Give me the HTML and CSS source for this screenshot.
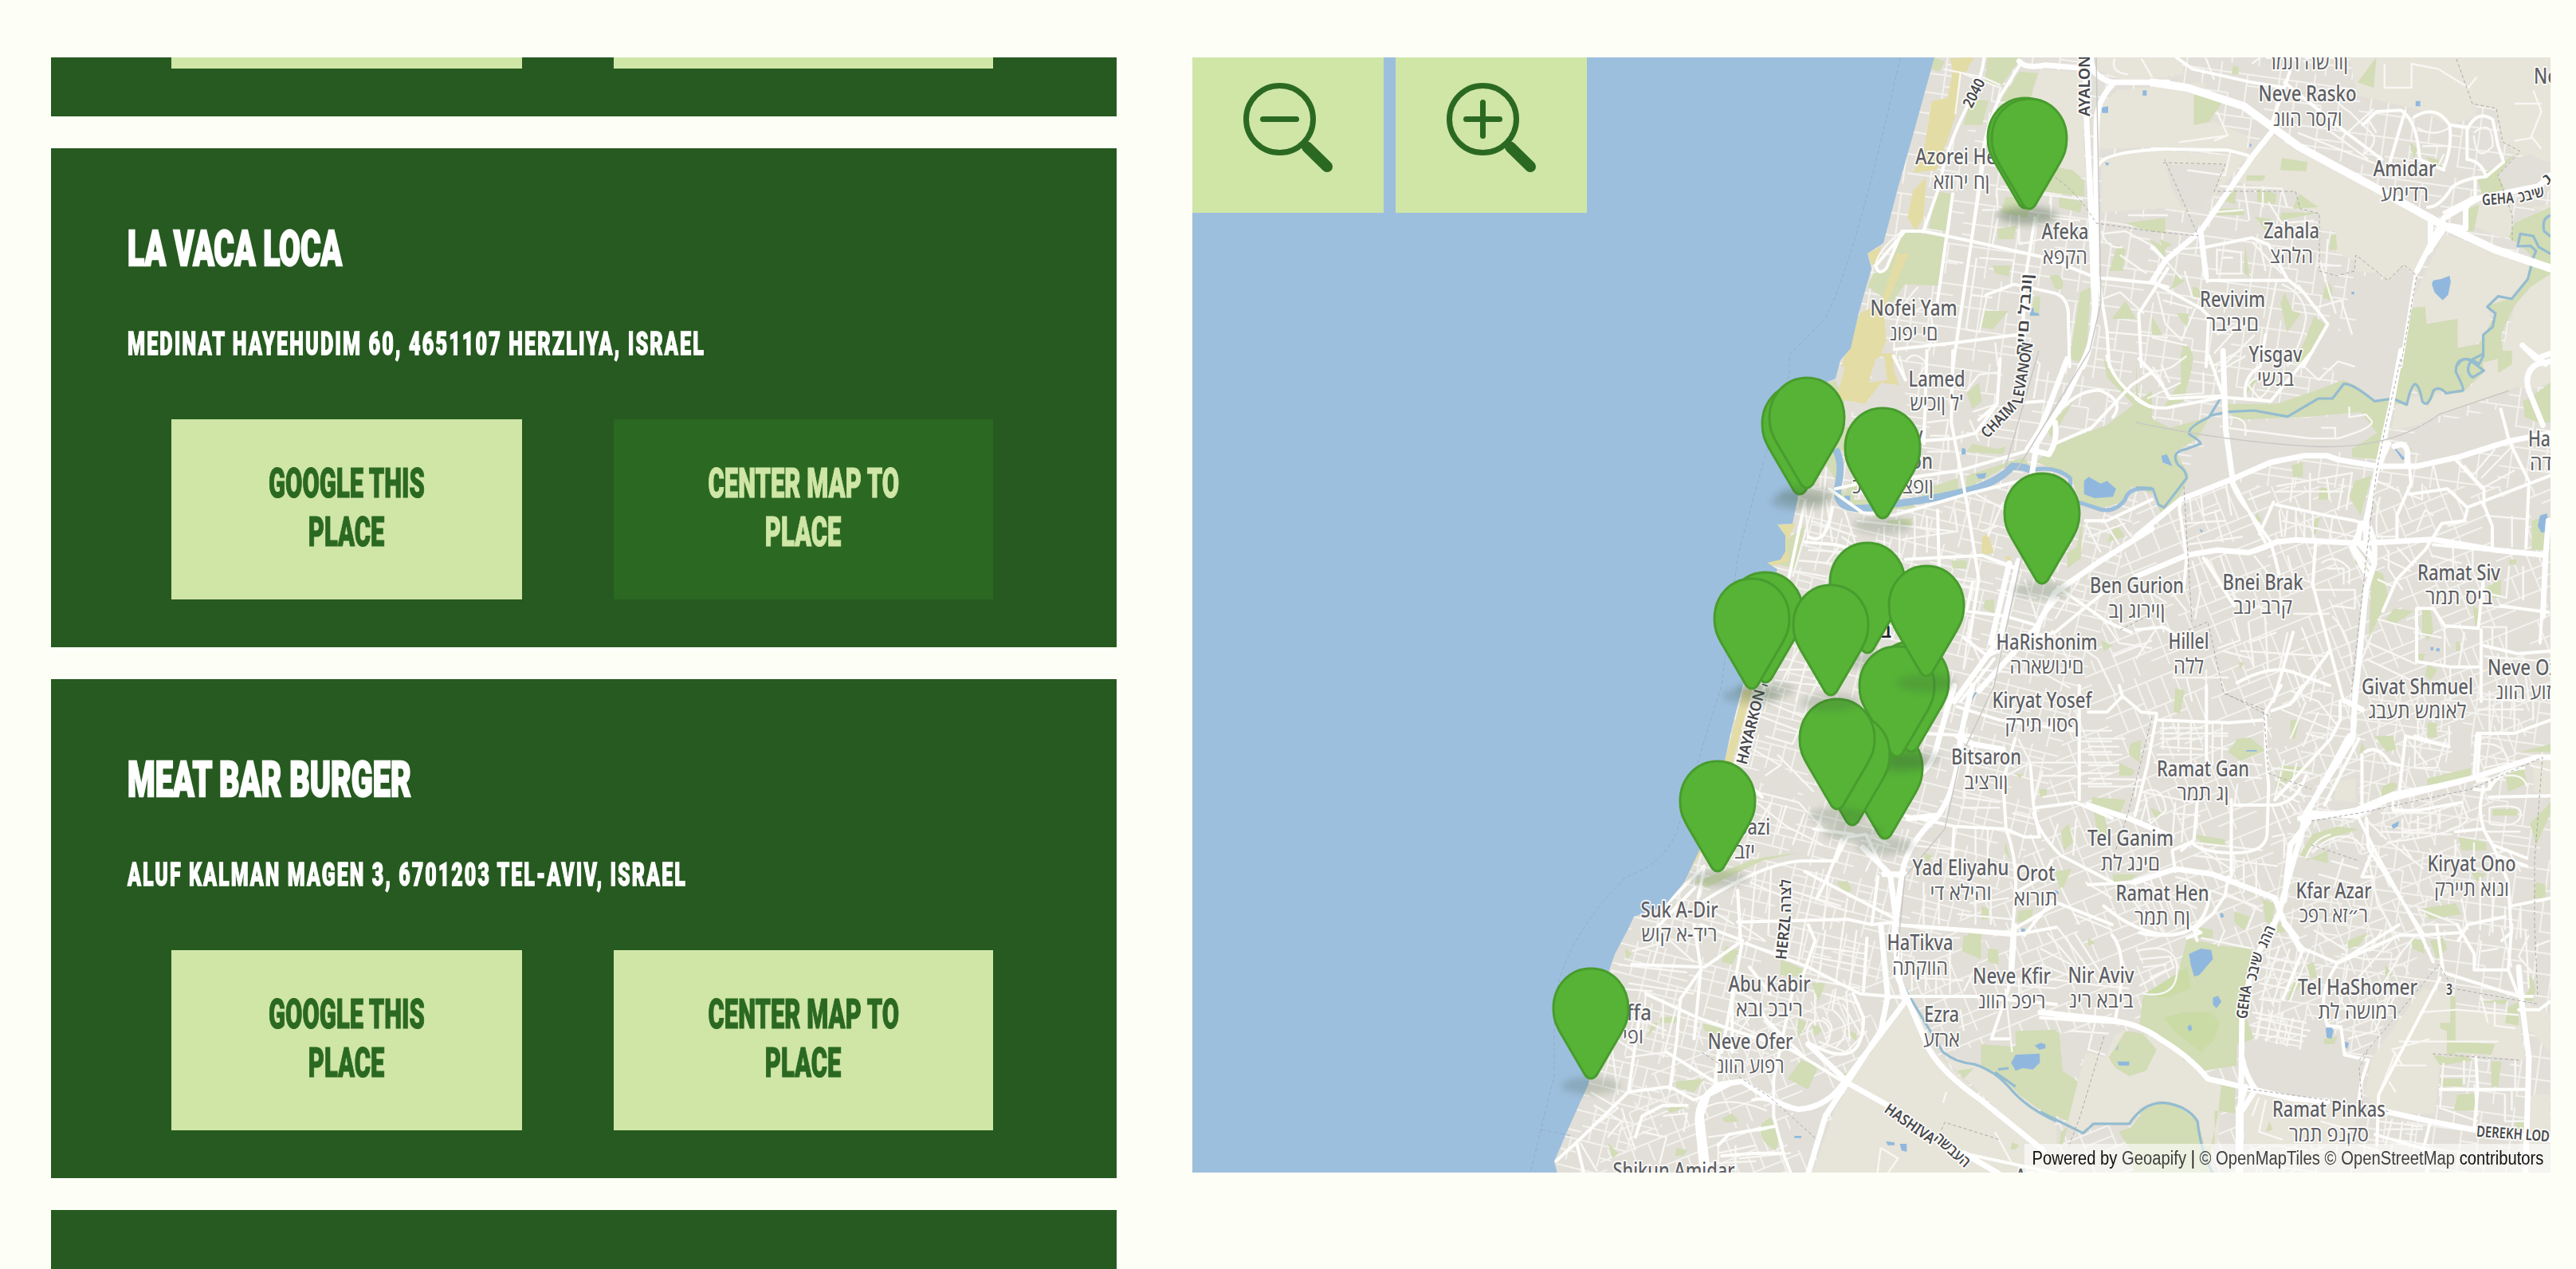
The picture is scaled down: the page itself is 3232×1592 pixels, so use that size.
FILE: index.html
```html
<!DOCTYPE html>
<html lang="en">
<head>
<meta charset="utf-8">
<title>Places</title>
<link rel="stylesheet" href="styles.css">
</head>
<body>
<main class="page">
  <section class="places">
    <article class="card card-first">
      <div class="actions"><button class="btn google" aria-label="Google this place"></button><button class="btn center" aria-label="Center map to place"></button></div>
    </article>
    <article class="card">
      <h2 class="name"><span class="fit fit-vaca">LA VACA LOCA</span></h2>
      <p class="address"><span class="fit fit-medinat">MEDINAT HAYEHUDIM 60, 4651107 HERZLIYA, ISRAEL</span></p>
      <div class="actions">
        <button class="btn google"><span class="line">GOOGLE THIS</span><span class="line">PLACE</span></button>
        <button class="btn center active"><span class="line">CENTER MAP TO</span><span class="line">PLACE</span></button>
      </div>
    </article>
    <article class="card">
      <h2 class="name"><span class="fit fit-meat">MEAT BAR BURGER</span></h2>
      <p class="address"><span class="fit fit-aluf">ALUF KALMAN MAGEN 3, 6701203 TEL-AVIV, ISRAEL</span></p>
      <div class="actions">
        <button class="btn google"><span class="line">GOOGLE THIS</span><span class="line">PLACE</span></button>
        <button class="btn center"><span class="line">CENTER MAP TO</span><span class="line">PLACE</span></button>
      </div>
    </article>
    <article class="card"></article>
  </section>

  <section class="map">
    <svg class="canvas" viewBox="1496 72 1704 1399">
      <defs>
        <pattern id="blocks-a" width="118" height="104" patternUnits="userSpaceOnUse" patternTransform="rotate(8)">
          <path class="minor" d="M0 12H118M0 38H70M0 66H118M40 90H118M14 0V66M36 12V104M58 0V38M70 38V104M92 12V66M104 66V104M14 66V90H36M70 52H92M92 26H118M70 80H104M0 52H14"/>
        </pattern>
        <pattern id="blocks-b" width="132" height="112" patternUnits="userSpaceOnUse" patternTransform="rotate(-22)">
          <path class="minor" d="M0 10H132M0 34H52M52 44H132M0 60H100M0 88H132M20 10V60M38 34V112M52 0V60M76 44V88M100 10V112M116 44V88M64 10V44M84 10V44M10 60V88M60 88V112M80 100H132M38 74H76"/>
        </pattern>
        <pattern id="blocks-c" width="84" height="72" patternUnits="userSpaceOnUse" patternTransform="rotate(14)">
          <path class="minor" d="M0 8H84M0 26H48M0 44H84M30 60H84M12 0V44M30 8V72M48 0V44M62 8V60M74 44V72M48 34H84M12 16H30"/>
        </pattern>
        <g id="pin">
          <ellipse class="shadow" cx="0" cy="8" rx="37" ry="11"/>
          <path class="drop" d="M-7 -5L-38 -58C-44 -69 -47 -76 -47 -89C-47 -117 -27 -139 0 -139C27 -139 47 -117 47 -89C47 -76 44 -69 38 -58L7 -5Q0 3 -7 -5Z"/>
        </g>
        <filter id="soft" x="-30%" y="-80%" width="160%" height="260%"><feGaussianBlur stdDeviation="4"/></filter>
      </defs>

      <rect class="land" x="1496" y="72" width="1704" height="1399"/>
      <!-- street blocks -->
      <rect fill="url(#blocks-a)" x="2230" y="72" width="970" height="540"/>
      <path fill="url(#blocks-c)" d="M2200 610L2690 600L2640 780L2530 1100L2400 1200L2000 1471H1950L2040 1150Z"/>
      <path fill="url(#blocks-b)" d="M2690 610H3200V860L2900 1471H2000L2100 1300L2400 1200L2530 1100L2640 780Z"/>
      <path fill="url(#blocks-a)" d="M2900 860H3200V1471H2800Z"/>

      <!-- open land, parks, beaches and lakes -->
      <g transform="matrix(.33333 0 0 .33333 2200 60)">
        <path class="farm" d="M1080 80L1230 90L1250 490L1130 440L1040 200ZM1300 220L1370 160L1700 130L1700 370L1300 380ZM1310 420L1420 385L1560 380L1560 600L1310 620ZM1290 36H1560V110L1400 125L1290 80Z"/>
        <path class="plain" d="M1060 910L1180 940L1190 1200H1040ZM760 40L860 36L840 300L740 330Z"/>
        <path class="green" d="M880 36H1010L930 145L870 130ZM1000 90L1070 95L1040 200L930 200ZM680 36L720 50L700 90L670 80ZM820 190L885 200L860 290L790 290ZM565 690L720 710L695 895L570 890L520 960L430 900L450 850L490 840ZM690 540L745 550L725 690L660 680ZM1110 445L1200 460L1245 500V560L1090 540ZM950 560L1050 570L1030 640L930 620ZM1150 560L1240 580L1230 620L1150 600ZM900 820L970 820L960 860L910 850ZM1115 860Q1150 840 1165 880Q1170 920 1135 905ZM1230 920L1270 900L1250 1190L1190 1170ZM870 990L960 990L900 1060L850 1050ZM1060 930L1080 940L1075 1010L1040 1010ZM920 680L990 670L980 720H920ZM1370 740L1400 760L1390 840H1340ZM1400 950L1440 1020H1350ZM1400 660L1550 640V700L1460 680ZM1490 720L1550 750V800Z"/>
        <path class="sand" d="M740 40L830 36L800 90L780 110L770 230L690 460L600 470L640 400L670 200L730 190L750 90ZM650 485L640 640L610 690L580 640L600 540ZM430 775L480 745L470 800L445 820ZM540 775L585 775L490 990L500 1100L460 1200H330L400 1000L480 960Z"/>
        <path class="lake" d="M1310 225L1335 220V245H1312ZM1465 160H1480V180H1465ZM1045 980H1055V995L1075 1000V1008H1040ZM1322 430L1340 435L1330 445Z"/>
      </g>
      <g transform="matrix(.3393 0 0 .3333 2700 60)">
        <path class="farm" d="M0 36L100 36L120 100L0 110ZM0 150L160 170L150 290L230 280L350 330V400L0 370ZM0 385L350 410L180 620L0 600ZM440 320L540 390L850 540L1030 640L1030 700L975 850L920 820L880 880L850 850L750 840V800L680 770V690L620 680V620L520 610L545 545L300 505L360 430ZM730 36H1474V430L1350 400L1290 350L1270 230L1200 215V260L1100 290L980 230L760 180ZM1080 700L1280 770L1400 800L1390 860L1330 950L1240 970L1260 1060L1210 1110L1130 1130V1020L1010 1040V975H950ZM1210 570L1330 590L1340 690L1300 720L1170 660ZM1400 860L1474 850V1200H1280L1340 980ZM1400 600L1474 590V620Z"/>
        <path class="plain" d="M50 440L265 440L235 540L180 620L110 600L70 520ZM750 850L880 880L920 830L975 855L910 1200H550L650 1030L680 1060L740 1090L760 1000L720 940ZM1300 430L1400 400L1474 440V530L1400 550L1200 520Z"/>
        <path class="green" d="M155 175L260 205L210 280L155 290ZM480 415L575 430L570 465L475 460ZM830 36L820 150L760 130ZM350 480L420 480L410 500L350 500ZM250 605L340 605V630H240ZM265 575L310 530L310 590ZM390 530L460 550L455 590L390 580ZM545 550L615 600L520 605ZM480 620L620 620L470 650ZM380 635L440 645L420 690ZM950 350L980 380L970 420ZM1010 410L1060 420L1085 470L1050 450ZM1205 500L1230 470L1300 430L1350 395L1310 440L1280 480L1310 540L1220 550ZM1160 610L1210 590L1190 690H1160ZM1320 715L1340 660L1474 600V850L1400 900L1340 970L1290 1080L1300 1170L1240 1200H915L950 980L1010 975L1015 1040L1130 1020V1130L1210 1115L1240 1060L1270 1000L1240 970L1340 940L1390 860L1400 780L1360 740ZM345 740L360 860L340 850ZM490 920L520 990L550 1000L500 1070L475 960ZM90 840L120 880L70 910ZM150 900Q190 900 180 950L150 940ZM645 880Q680 900 660 950L630 940ZM600 1010L640 1040L560 1190H530ZM90 1000H135V1060ZM0 1010L40 1080H0ZM110 1110Q160 1130 150 1190H120ZM660 710L680 700L685 760H655ZM30 720L75 740L40 760ZM300 70H320V100H295Z"/>
        <path class="lake" d="M1040 875L1070 870L1100 858L1105 880L1095 930L1075 950L1045 920L1035 890ZM975 200H992V220H975ZM360 360L370 365L362 375ZM738 918H748V928H738Z"/>
      </g>
      <g transform="matrix(.3827 0 0 .3333 2100 440)">
        <path class="plain" d="M660 30L720 20L750 110L770 240L640 260L530 200L640 190ZM850 240L990 130L1000 260L910 330H830ZM1060 20L1180 40L1190 190L1100 180Z"/>
        <path class="green" d="M480 130L530 110L560 190L540 280L610 300V420L560 540L500 430ZM850 510L930 480L935 530L800 560ZM960 470L1150 400L1170 440L1100 430L960 520ZM1190 420L1250 350L1420 280L1568 150V540L1500 510L1470 570L1380 600L1330 560L1300 470ZM1240 330L1310 190L1220 290ZM360 720L430 660L400 820L330 800ZM1340 630L1335 780L1290 820V760L1320 740ZM1410 30L1480 130L1560 210L1530 230L1420 100ZM960 160L1000 120L1010 190L980 220ZM980 350L1060 370L1090 360L1080 390L960 380ZM910 790L960 790V820H915ZM1020 940L1050 935V990L1015 970ZM1400 1090L1440 1110L1410 1130ZM1450 650L1480 700L1420 720ZM700 640L780 630V660H700ZM640 340L540 380L540 570L600 610L800 590L750 560L590 560Z"/>
        <path class="sand" d="M570 10L720 10V70L740 130L680 120L640 180L630 200L530 180L550 110ZM660 20L640 120L700 110L690 20ZM340 655L400 650L370 720L380 790L330 810L305 800L360 760L360 700ZM1010 700L1030 690L1050 760L1010 770ZM1085 775L1105 775L1100 800Z"/>
        <path class="lake" d="M1345 540V490L1360 475L1400 500L1420 490L1450 520L1440 550L1380 555ZM990 465L1025 460L1020 480L1000 482ZM560 545H578V565H560ZM945 365L957 370V390H943Z"/>
      </g>
      <g transform="matrix(.352 0 0 .3333 2680 440)">
        <path class="farm" d="M930 180L1180 150L1240 80L1290 90L1400 20V120L1150 220L1000 280L910 300ZM1180 60L1400 0H1477V120L1400 150Z"/>
        <path class="plain" d="M640 0H950L915 180L850 190L780 130L720 120L700 70ZM350 270L800 240L860 280L780 380H720L560 400L350 470L320 300ZM1000 290L1290 220L1330 330L1050 420L970 360ZM200 370L330 340L340 480L150 560L190 470ZM1230 590L1400 500L1390 740L1270 740Z"/>
        <path class="green" d="M0 40L10 230L120 290L260 250L220 330L140 380L190 470L150 560L90 620L60 520L0 510ZM320 200H500L640 150L740 110L780 130L850 190L910 180L870 410L770 400L770 370L860 310L800 230L600 250L350 260ZM950 0H1230L1240 80L1160 160L1070 150L1040 210L990 140L960 200H920ZM1290 0H1340V50L1290 85ZM1380 190L1440 150L1477 120V270H1430L1385 250ZM555 430L595 420V475H560ZM655 515H685V560H650ZM780 490L840 470L800 620L760 550ZM380 180L440 100L400 120ZM640 630H655L640 690H625ZM430 610L450 640L420 650ZM840 820L880 840L900 930L830 1080ZM920 970L990 980L920 1030L890 1010ZM1410 640L1470 620V750H1410ZM1020 975H1050L1060 1060L1040 1090L1020 1060ZM1250 890L1300 860V930H1270ZM1330 785H1355V805H1330ZM1200 960L1230 980L1210 1040ZM780 740L830 830L780 800ZM1040 1180L1075 1200L1050 1240L1030 1220ZM365 1170L385 1175L370 1200ZM1140 1095H1155V1130H1140ZM1000 1140H1030L1020 1180ZM40 200L100 210L160 110V0L200 60L170 190L110 210ZM930 340L990 380L960 350Z"/>
        <path class="lake" d="M1440 620L1465 612L1470 680L1445 685L1432 660ZM918 365L928 370L958 405L950 412ZM90 395L110 390L130 435L95 420ZM1050 1115H1060V1128H1050ZM1070 1120H1082V1132H1070ZM225 670L240 678L232 685Z"/>
      </g>
      <g transform="matrix(.3827 0 0 .3333 2050 860)">
        <path class="plain" d="M390 330L470 290L560 370L520 430L430 380ZM1060 900H1180V960H1060Z"/>
        <path class="green" d="M380 660Q440 640 540 630L420 660L240 760L200 740ZM665 740L700 735L715 770L690 785ZM1380 700L1435 690L1400 780ZM1510 430L1568 425V480L1540 460ZM1400 550L1425 520L1440 590L1410 620ZM1140 830L1165 840L1160 880H1140ZM1260 850L1310 840L1300 890H1255ZM1330 390H1355L1350 425L1330 415ZM1250 330L1275 335L1265 350ZM950 630L980 640L960 670ZM1220 590L1235 660L1215 620ZM1100 920H1140V950H1090Z"/>
        <path class="sand" d="M360 20L390 10L320 300L225 620L160 740L180 680L215 600L300 270Z"/>
        <path class="lake" d="M1380 770L1392 775V785H1380ZM1270 915H1282V930H1270Z"/>
      </g>
      <g transform="matrix(.3903 0 0 .3333 2620 860)">
        <path class="plain" d="M590 150L680 100L740 130L700 210L590 240ZM780 400L870 370V460L790 470ZM1170 150H1230V320L1170 310ZM690 660L770 610L890 640L890 720L800 800L690 740Z"/>
        <path class="farm" d="M1430 290L1486 280V420L1430 400ZM800 360L860 350V440L790 430Z"/>
        <path class="green" d="M280 10L310 20L295 105L275 100ZM480 200L520 195L570 245L490 285L450 250ZM135 220L170 205L165 290L130 260ZM100 290L150 320L140 340H100ZM10 420L120 430L100 490L50 480L70 570L30 560ZM620 300L710 310L600 390ZM780 290L790 300L760 360ZM1090 350L1230 310V340L1090 390ZM880 210L890 240L870 260ZM920 190L980 190L990 240L960 250ZM1090 140H1120V195H1090ZM945 380Q990 350 995 380L940 440ZM680 640L720 560L800 530L870 540L720 600L700 660L770 620V670ZM1070 840L1180 820L1200 860L1100 880ZM1300 465L1380 465V490H1300ZM470 850L520 870L500 920L470 890ZM1340 330L1400 310L1410 370L1350 400ZM1420 520L1486 440V480L1440 600ZM340 560L440 580V600H370ZM1190 570L1280 590V620H1200ZM1230 700L1280 710L1250 740ZM1390 250L1486 220V250ZM1440 740L1470 750V800H1430ZM200 460L240 480L220 510ZM650 130H680L665 200H650ZM440 750L560 800L570 890L590 900L600 820ZM610 890L635 900L630 930H605ZM80 710H160L140 730L80 740ZM360 910L400 920V950H350Z"/>
        <path class="lake" d="M975 525L1000 510L995 530L980 540ZM425 855L435 860V873H425ZM508 243H542V248H508Z"/>
      </g>
      <g transform="matrix(.4337 0 0 .3333 1900 1160)">
        <path class="farm" d="M1130 300L1230 500L1390 700L1530 840L1568 936H860L930 690L980 580L1080 370ZM1240 500L1400 560L1568 760V860L1500 820Z"/>
        <path class="plain" d="M810 690L930 640L860 870L790 830ZM1010 290L1100 290L1050 380ZM1240 480L1340 460L1360 540Z"/>
        <path class="green" d="M770 130L840 170L820 195L770 190ZM610 80L650 100L630 150L600 140ZM1350 450L1450 460V400L1568 395V740L1460 640L1400 560L1350 530ZM830 510L880 530L850 620L790 580ZM545 370L600 390V420L550 400ZM860 220H900L880 290ZM820 350L845 370L820 430ZM740 725Q780 780 755 850Q700 810 715 750ZM1300 40L1350 50V130L1295 100ZM1370 90L1400 95V150L1370 140ZM465 590L550 580L520 630L470 615ZM270 820L300 860L285 880ZM470 840L500 850L490 870H465ZM1280 550L1330 540L1300 580ZM320 90L340 110L325 130ZM860 380Q880 370 890 400L870 420ZM440 690L510 680L450 710ZM600 730L630 710L650 740L610 745ZM420 350L470 345V370H420ZM950 390L990 410V440ZM400 370H420L380 430ZM930 570L980 550L960 580ZM1440 820L1460 830L1450 845H1435Z"/>
        <path class="lake" d="M1437 520L1450 490L1520 485V520L1500 545L1470 540L1450 550ZM1505 455L1530 440L1538 455L1520 472ZM1075 815L1100 820V830H1080ZM1115 825H1135V855L1120 850ZM810 795H830V803H810Z"/>
      </g>
      <g transform="matrix(.4286 0 0 .3333 2560 1160)">
        <path class="farm" d="M130 490L240 400L300 410L390 460L490 580L530 610L520 830H480L460 740L400 680L350 660L290 690L260 750L150 745L120 780L80 740ZM600 620L680 650L840 665L930 680L920 760L870 830H600L590 700ZM1120 240L1200 260V480L1150 500L1170 520L1155 710H1000L950 640L970 500ZM1210 320L1400 340L1420 510L1210 480ZM1400 290L1492 330V480L1420 380ZM1440 640H1492V936H1380Z"/>
        <path class="plain" d="M640 430L770 470L850 370L890 490L960 510L940 650L780 650L640 620L600 550V440ZM0 400L60 410L230 380L190 500L130 480L100 580L60 550V420ZM740 370L840 350L830 480L760 470ZM250 300L290 280L270 390L220 370Z"/>
        <path class="green" d="M430 50L530 80L620 90L600 340L625 430L575 450V530L480 550L420 510L360 430L290 380L300 270L400 200ZM0 400L55 405L65 550L110 590L80 740L0 690ZM250 400L300 410L340 470L310 550L260 570L220 540L200 500ZM530 600L570 610V710L510 700V830H480L460 740L400 680L350 665L300 700L270 760L230 780L270 860V936H500V830L520 715ZM1200 270H1215V490H1190V400L1170 390V370H1200ZM1215 440L1330 450L1320 490L1215 480ZM1150 490L1210 500L1230 490L1270 510L1170 530ZM1370 310L1400 290V380L1360 370ZM1280 290L1370 280L1360 300ZM1140 60L1180 50L1190 90L1160 130ZM1085 50L1120 60L1125 110L1090 90ZM1320 515H1350L1340 610H1320ZM1220 640L1270 635L1275 700H1210ZM1170 580H1235V610H1170ZM780 150L800 140L810 200H790ZM740 220H770L720 290ZM900 60L960 30L930 80L900 90ZM1010 150L1030 190L1010 200ZM1430 190Q1460 220 1440 290L1400 280L1430 250ZM830 430L870 420L860 450H830ZM140 50L160 70L140 80ZM1390 740H1415V770H1390ZM670 740L680 770L660 780ZM60 780L80 760L65 830H55Z"/>
        <path class="bright" d="M420 330L500 330L525 370L510 430L470 480L400 410L360 350ZM300 265L430 160L440 240L370 275Z"/>
        <path class="lake" d="M435 110L470 90L500 95L505 130L465 190L450 195L440 150ZM505 275L520 268L530 290L515 315L505 300ZM430 385L440 375L445 395L435 402ZM835 390L850 380L858 400L852 430L838 425ZM892 440L903 445L898 468L892 460ZM225 515H260V530H230ZM0 445L15 450V465L0 470ZM228 450L222 470L225 475Z"/>
      </g>

      <!-- Yarkon and Ayalon -->
      <g transform="matrix(.3827 0 0 .3333 2100 440)">
        <path class="river wide" d="M530 370Q555 420 540 500T580 590Q620 600 700 580Q850 560 950 530Q1060 500 1110 435Q1150 435 1170 450"/>
        <path class="river mid" d="M1170 450Q1250 430 1300 480V560L1380 590Q1440 620 1480 560Q1490 510 1568 520"/>
      </g>
      <g transform="matrix(.352 0 0 .3333 2680 440)">
        <path class="river" d="M0 515L60 520L80 580L100 590L180 480Q180 450 150 430Q120 380 180 370L230 350Q230 340 190 315Q180 290 260 250L300 180M260 245L330 230L420 225L540 248L650 180H700L740 125Q770 120 850 190L915 180L965 203Q980 130 995 125Q1010 130 1020 190Q1040 220 1060 150Q1080 130 1105 160L1165 150Q1170 140 1140 80Q1140 20 1190 35L1240 75L1200 100Q1170 80 1195 35L1240 10"/>
      </g>
      <g transform="matrix(.3393 0 0 .3333 2700 60)">
        <path class="river" d="M1130 1195Q1150 1150 1210 1190L1225 1160L1225 1080L1260 1050L1270 1000L1240 975L1280 935L1330 945L1390 870L1410 790L1420 765L1400 745L1352 747L1362 700L1410 708L1430 750L1474 775M1474 630Q1440 640 1450 690L1474 710"/>
      </g>
      <g transform="matrix(.4337 0 0 .3333 1900 1160)">
        <path class="river" d="M1115 210L1240 480Q1280 520 1330 525Q1390 550 1430 610Q1480 690 1568 740M1390 555L1450 610M1400 545L1430 540"/>
      </g>
      <g transform="matrix(.4286 0 0 .3333 2560 1160)">
        <path class="river" d="M0 705L125 785L155 750H260Q300 670 360 670Q430 680 460 740Q470 860 505 936"/>
      </g>
      <g transform="matrix(.3827 0 0 .3333 2050 860)">
        <path class="river thin" d="M1140 0Q1060 110 1070 200Q1070 380 990 510Q900 600 880 700L860 880"/>
      </g>

      <!-- streets and highways -->
      <g transform="matrix(.33333 0 0 .33333 2200 60)">
        <path class="street" d="M780 90L760 250M770 90L930 150L890 310M750 550L730 720M860 400L820 720M860 610H920L915 530L1240 570M920 640L900 740M1000 630V740M1120 560V640L1230 650M1000 740L1240 680M820 930L900 940M840 790L800 1060L850 1070L880 930M850 790L980 800L970 890M730 800L790 810M590 1020Q640 930 740 1010M460 810Q480 750 560 690M530 1140Q520 1000 620 900M660 1140Q700 1000 620 940M910 1110L920 1200M1330 1070L1560 1090M1300 950L1380 920L1470 1000M1310 700L1400 690L1510 750L1560 810M1360 40Q1340 90 1410 100M1460 40L1500 110M1410 630H1560M1310 690Q1330 760 1390 750M1380 780L1480 850M715 80L860 110L930 140"/>
        <path class="road" d="M868 36Q860 120 800 230Q720 390 700 520L640 690M570 690L460 820Q470 860 500 830L560 690L640 690L830 730L1100 790L1290 865L1500 885L1560 900M750 550L690 970M870 400L820 730L750 1200M530 1135L760 1110L990 1080M875 930L980 890L1120 920Q1190 930 1185 1020L1190 1200M1300 440Q1320 390 1560 380M1560 830L1450 1000L1460 1200M1060 640L1020 890L1010 1200M1290 430L1300 220M1300 880L1330 1060L1340 1200"/>
        <path class="highway" d="M1000 50Q1020 80 1100 65L1220 75Q1260 90 1250 200L1270 600L1280 900Q1300 1080 1230 1200M1560 130L1350 130Q1270 110 1270 36M1350 140Q1290 200 1290 300L1290 880Q1290 1080 1240 1200"/>
        <path class="road" d="M1005 60L930 180Q870 310 860 420"/>
      </g>
      <g transform="matrix(.3393 0 0 .3333 2700 60)">
        <path class="street" d="M650 150Q690 220 730 240Q790 300 820 330Q830 370 780 400M800 270L830 320M640 300L800 420M540 320L860 450M700 340L820 230M860 60V150H960V60L1060 80L1170 150L1200 110M980 300Q1040 340 1100 300M1000 370H1100M1080 400L1060 440M1190 320Q1260 260 1260 370Q1200 440 1190 330M1410 160L1440 240L1400 340L1340 350M1340 210H1440M1400 330L1440 380M290 390L270 480L130 460M240 240L280 330L230 350M100 355L280 330M250 520L480 530L500 600M340 510L360 650M410 520V600M430 580L480 660L600 650M210 620L340 610M240 760V850H330V770ZM260 790H300M370 730L480 850M400 740L420 840M460 880L420 1090L400 1200M540 890L600 980L700 950L740 1080M50 800L110 870M80 760L200 750M120 840L150 940L200 950M20 920L50 1040L110 1100L160 980M40 950L150 980M0 1090L130 1120M230 1150L310 1060M240 1080L330 1040M260 1200L380 1080M620 800L680 1000M610 820L700 820M650 720L640 880M480 890Q560 920 570 1010Q560 1100 500 1200M370 60L400 36M200 40L230 120"/>
        <path class="road" d="M90 36L150 80L370 130L490 150M510 90L440 290M490 130L720 320L850 420M0 380L280 385L355 405M200 750L370 715L430 740L500 870M215 875H505L560 920L650 1040L560 1200M0 880L180 980L210 1010L200 1200M180 700L205 880M830 240L920 235Q980 270 990 420L1080 460M935 240L880 430M780 290L830 240M970 260Q1050 210 1100 290Q1110 350 1090 420L1080 450M1100 290L1165 300M1165 420V310Q1200 230 1260 270L1280 370L1300 430L1235 485L1190 490Q1110 510 1100 540Q1060 600 1020 600M1170 420Q1220 430 1235 485M1195 490V560L1080 620M0 750L50 800M400 1200L420 1080"/>
        <path class="highway major" d="M0 130L130 150L340 220L540 370L850 540L1080 670L1270 760L1474 830"/>
        <path class="highway" d="M440 320L370 410L180 690L50 800L0 880M1474 480L1430 520L1210 565L1080 640Q1020 760 980 840M180 690L200 860M1080 680L1020 770M1160 600L1160 680L1100 670M1030 640V760"/>
        <path class="road" d="M975 850L920 1200"/>
        <path class="highway" d="M1474 1150L1420 1170L1370 1120"/>
      </g>
      <g transform="matrix(.3827 0 0 .3333 2100 440)">
        <path class="street" d="M740 20L760 110M760 40Q790 -10 830 50L800 100M830 270L900 260L890 330M960 150L1000 90L1070 80L1060 200L980 230M1190 40L1200 50L1180 180M1000 340L970 260M840 320H900L900 380H830M560 600L600 740L550 700M500 440L480 700M430 560L440 700M460 570L390 850M500 560L520 720M450 640L600 700M540 740L500 800M440 750L580 760M410 790L520 800M400 830L500 850M690 660L690 760M740 640V780M790 620V780M830 620V760M920 600L930 680L750 710M600 640L920 680M1010 680L1060 660M990 540L1120 620M1080 570L1030 700M1150 700L1250 870M1350 650L1400 760M1410 640L1460 730M1450 620L1500 700M1360 700L1480 650M1150 860L1190 1010M1200 920L1330 960M1330 860L1250 1010M1400 1000L1460 1100L1568 1120M1240 1050L1300 1180M1440 1150L1568 1090M880 850L990 870M870 870L1000 900M960 1060L1010 1180M1060 900L1190 930M1190 1200L1300 1270M970 1010L950 1200M1290 1080L1390 1160L1450 1300M1000 1200L1190 1220M340 1200H500M330 1240L480 1260M420 1100L340 1280M450 1110L400 1320M480 1220L440 1320"/>
        <path class="road" d="M830 0L820 350M915 0L910 270L960 570L1000 860L970 1080M990 310L1060 200M1210 190L1150 195M720 20L760 110M530 520L610 500M700 490L940 450L1180 370M810 340L920 330L990 310M510 520L620 610L720 620L960 540L1170 480M430 720L530 730L600 750M760 785L1010 770L1120 820M865 600L870 820M430 570L380 840L330 1090M980 870L960 980L1090 1000L1180 1030M960 970L880 1140M950 1080L1030 1150L1080 1120M1190 1070L1210 1000L1260 930M1080 1110L1250 1060L1420 900M1260 890L1420 1020L1500 1060M1350 640H1420L1568 560M1420 20Q1440 130 1560 210M1210 300Q1310 140 1400 150Q1480 190 1440 250M1000 260L1060 200L1070 30M1250 350L1370 290L1500 130L1568 80M1050 1160L940 1320M1010 770L1130 820M520 590Q500 740 440 700"/>
        <path class="highway" d="M1360 0L1290 170L1190 350L1175 460M1290 30L1200 300L1160 370L1230 390Q1260 340 1250 270M1130 790L1070 1080L920 1320M1568 670L1400 790L1250 910L1190 1040L1000 1280M1100 800L1040 1100"/>
      </g>
      <g transform="matrix(.352 0 0 .3333 2680 440)">
        <path class="street" d="M20 40Q50 100 130 60L180 20M40 180L160 120M80 90L110 170L240 160V80M90 50L120 120M60 60L100 130M400 130Q420 90 460 110T440 180ZM270 60L370 0M290 80L390 20M600 60L650 110L720 40L780 60M660 290H710V330M330 250Q390 250 390 290V320M320 290L620 330H720Q850 290 840 265L820 240L760 250V210M860 490L940 530M620 460V600M560 480L550 570M680 480L690 560M500 510L610 490L770 460L750 600M500 530H740M740 480L720 600M190 540L200 640M230 540L240 620L300 600M320 500L340 620M170 650L320 640M280 600L310 720M180 730L380 700M400 560L480 530M510 600L520 700M540 600L530 700M570 600V710M600 610V710M630 610V710M520 640L780 700M700 630L690 710M1020 500V560L970 540M870 550Q850 620 860 700H930M1060 430L1080 520M1130 400L1230 520L1350 450M1170 430L1200 470L1280 370M1230 480L1340 360M1060 620L1030 600L1000 680M1240 620L1400 635M1340 620V740M1110 660L1180 640M880 780L980 830M900 750L900 820L950 900M860 860L920 890M930 740L990 810M1050 770L1160 800M1130 740V820M1200 750V830M1330 810L1320 930L1200 900M1240 840V960L1470 980M1380 810V940M1230 1040H1320V1130M1270 1040V1120M1170 1060L1150 1190M1100 1040V1190M990 1060L1090 1080M860 1010L1000 1050M830 1100L1000 1180M820 1160L980 1240M840 1070L790 1200M640 900H780V970L700 960M660 800Q710 760 760 820V880M680 820H740V880M540 770L560 850L620 870M500 780L520 990M420 770L480 850M300 770L350 930L480 980M250 780L330 920M200 790L230 900L210 1010M120 900L180 980M10 880L110 950M70 1050L0 1160M40 880L100 1060M350 1010L370 1090L290 1120M400 1020L420 1190M460 1000L470 1200M540 1060L510 1200M370 1130L680 1150M400 1100L500 1060M590 1040L650 1200M700 1000Q760 1060 770 1180M560 990L690 990M560 1200L600 1320M640 1220L620 1320M250 1200L250 1320M130 1230H330M180 1230L200 1320M310 1130L420 1160M1240 1150L1470 1170M1320 1130V1320M1290 1140V1230M1120 1190V1320M1380 1150L1400 1320"/>
        <path class="road" d="M10 30Q90 110 120 180L300 170M260 20L310 170M630 0L480 190L390 180Q380 100 440 60M0 180Q40 220 110 215L310 175L480 190M500 580L680 620L780 640L810 650M460 720L350 500M440 690L490 570M340 500Q370 570 400 600L480 720L510 840M640 720L630 880L690 1120L740 1320M160 560Q150 600 160 630L180 780L170 900M970 380L980 500L930 620V710M975 540L1110 520L1180 590L1477 470M1180 600L1170 640L1090 650L1030 750L930 860L880 980M1400 500L1390 740M1240 580L1270 660V740M1300 220L1330 340L1400 490M1130 400L1240 520V580M1060 730L1250 750M1000 970L1060 970L1100 1035L1220 1045L1240 830M1000 970V1170L1120 1190H1220M1230 1050V1320M1300 960L1470 985M1240 1110L1360 1140L1477 1130M1460 780L1440 1100M690 1130L560 1320M360 1250Q480 1180 560 1210L690 1260M560 1060L490 1320M0 1050L100 1040L170 1090M240 780L350 960M780 740L840 830"/>
        <path class="highway" d="M310 0L320 300L345 490M0 700L160 560L350 480L480 420L600 395H680L720 410L860 435H1000L1150 400L1330 340L1477 310M0 850L180 770L290 750L400 760Q460 740 500 720L570 712L800 725L1060 710L1280 750L1460 770L1470 640M1460 770L1450 1000M920 360Q980 330 965 430M865 430L900 350M945 0L910 200L860 440L820 640V740L850 800L820 900L780 1320M800 650L790 720L850 790V720L830 660M1477 40L1430 50Q1380 80 1400 150L1450 280M1400 0L1460 50M810 650L770 740L820 840"/>
      </g>
      <g transform="matrix(.3827 0 0 .3333 2050 860)">
        <path class="street" d="M430 60L560 120L520 220L430 190M400 110L540 170M390 240L480 300L430 340M470 260L590 400M400 400L540 440L620 540M380 420L500 530L620 600M450 440L410 520M500 450L470 560M560 480L520 600M620 470L570 640M340 830L350 900L430 960M230 830L330 900M600 700L560 900M640 700L620 920M700 800L680 960M540 780L700 850M380 740L540 820M400 700L380 960M450 690L440 940M480 760L680 830M760 560L840 600M800 600L760 700M900 600L1060 620M900 540L880 620M1080 420L1200 440M1070 460H1200M1100 250L1080 420M1120 540V640M1160 540V680M1260 200L1300 290L1220 340M1300 290H1450M1340 320L1310 440M1460 170H1568M1460 210H1568M1460 250H1568M1460 290H1568M1460 330H1568M1460 370H1568M1330 340H1450M1340 420L1450 400M1100 820L1230 800M1060 860L1240 880M1000 760V900M950 740V900M1120 780V900M1170 760V900M1400 760L1460 900M1480 740L1568 800M1440 860L1568 920M1240 480L1310 500M1390 520L1370 600M1450 500L1440 640M1300 560L1350 700"/>
        <path class="road" d="M430 0L330 300M330 320L420 420M230 690L210 800M110 820L230 680M60 930L200 760M230 810Q440 660 560 660L660 660L700 570L760 560L820 700M590 540L720 560M680 580Q640 720 600 800M560 700L860 880M340 890L700 880L780 900L860 890M780 900L800 720M890 490L1050 530L1220 540L1280 570H1330L1310 450L1300 300M1050 530L1040 720M1320 460L1450 440L1568 500M1210 360L1220 540Q1260 660 1250 800L1240 940M1240 930L860 900M1280 940L1370 810L1568 900M1370 660L1340 720L1250 780M1060 80L1200 130L1440 170M950 180L1110 190M1310 480Q1330 560 1400 640L1568 740M1240 920L1390 820M1250 200L1210 360M1110 220L1090 350M1460 0V430M340 770L350 960"/>
        <path class="highway" d="M1050 0L1000 200Q980 300 940 330M1110 0L1080 140L1070 200Q1060 400 990 500Q900 590 880 700L850 960M820 710H890M990 490L900 500M750 610L840 710L860 890M1060 190L1110 220L1210 240"/>
      </g>
      <g transform="matrix(.3903 0 0 .3333 2620 860)">
        <path class="street" d="M230 160H370M230 180H450M230 200H370M230 230L370 240M220 260H370M210 290L370 300M240 130V240M290 140V250M330 140V300M400 140V300M430 140V290M390 230L450 240M400 190H450M0 200H120M0 230H100M0 260H110M0 300H100M0 350L180 355M0 380H170M160 340L150 420M170 400L340 440M190 430L170 510M180 400Q240 370 250 470L200 520ZM280 440L270 580M310 450L300 590M270 480L360 490M350 460V540M480 290L560 300M470 340L560 350M480 370L470 450M590 310L720 330M600 350L700 420M600 400L680 440M630 280L600 420M670 290L650 400M590 450L620 540M620 450L650 520M640 430L670 480M650 20L740 60L800 150M620 90L790 170M700 60L650 200M740 100L690 230M760 200L700 180M340 640L610 680M330 590L560 620M470 640V700M500 650V780M540 660V800M590 570L630 560V650M340 600L470 700M280 720Q370 740 380 810M200 730L260 900M230 720L290 900M150 750L240 930M110 760L220 920M180 740L350 840M390 770L540 830L510 920M440 780L560 850M720 630Q790 540 860 580L890 620M700 650Q720 580 780 560M780 660L870 690M740 710L860 750M820 650L790 760M890 500L960 580M940 480L1100 480L1200 440L1220 500Q1200 560 960 590M1000 440L990 490M1010 550L1080 540M1010 500V570M1060 490V570M1100 490V540M1130 470V540M940 550L1170 560M970 590L1080 690M1010 600L1040 650M930 650L970 760M900 640L930 820L1000 960M1060 840L1190 900L1070 900M1200 800L1220 920M1260 720V920M1300 720V930M1340 830V920M1390 830V950M1200 680L1320 700M1270 640L1350 620L1390 700M1180 580V680M1240 590V700M1340 340Q1400 330 1410 380M1290 460Q1400 440 1390 490T1290 520ZM1280 550H1390M1050 200V310H1120L1150 200M1030 210L1090 300M1160 150V230L1050 200M1260 220Q1340 210 1350 290L1270 310M1250 50L1400 60M1290 20V180M1330 40V180M1370 40V170M1250 90H1400M1420 300L1486 320M1430 130V60M1060 130V200"/>
        <path class="road" d="M0 100H60L110 40L170 100L220 105M225 130L450 140L565 130M100 0L110 40M380 0V130M590 95L650 70L690 0M620 0L570 100V230L580 380L575 560Q570 630 470 630Q370 630 330 590L270 620L280 700M460 430V720M380 140V280M350 440L340 580L300 620M470 450H600Q670 440 700 340M810 60V130L780 200L600 430M830 200L740 400M870 200L760 450M890 250Q930 220 970 290L1000 300M880 260V470M870 500L930 640L1080 960M915 620L880 720H915M895 500L900 610L1080 940M1020 190L1160 230M1050 190L1100 210M1250 180H1370L1486 130M1270 380L1260 450Q1260 540 1300 600L1350 740L1360 930L1330 960M1290 420L1486 415M1360 830L1486 800M1180 550L1270 540L1300 600M1190 960L1220 900L1340 870M1300 600L1410 650M1320 640L1410 680M1020 190L1000 400M1250 180L1240 330M1260 180L1250 360Q1300 340 1290 380Q1290 400 1240 390M1290 390Q1320 320 1400 310M980 440V470H1060L1200 440M220 110L190 300L150 490M0 750L150 740L280 690M390 780Q380 930 260 940Q150 930 50 830M450 720L440 790L400 860L340 920L350 960"/>
        <path class="highway" d="M860 0L850 200L700 480L680 580L650 700L610 870L570 960M680 500L760 490L860 470L980 410L1120 380L1230 350L1440 270H1486M720 480L860 490L960 430L1200 360M0 450L130 500L270 570M150 740L280 690L400 710L600 800M630 810L650 600L710 510M830 60L880 90M600 800L630 890L670 950M690 510L740 400L840 190"/>
      </g>
      <g transform="matrix(.4337 0 0 .3333 1900 1160)">
        <path class="street" d="M340 100L450 60L520 140M400 150L420 60M300 150L500 180M330 220L520 260M380 260L370 420M430 280V430M320 500L440 480M340 340L440 400M290 240L400 250M470 300L430 500M280 440L300 640M260 400L350 480M220 630L300 690L250 740M230 680L310 740L270 800M190 820L240 930M310 690L350 850M370 780L440 800L420 900M430 720L500 710L490 780M550 690Q620 640 730 700M560 800L730 770M590 860L700 830M590 820V900M640 830V930M650 880L800 860M560 900L700 890M830 200L1000 240M870 260V380M900 260L1000 300M930 240L920 320M960 250L970 440M880 440L960 480L1020 400M890 350Q940 380 900 430M920 320Q990 390 930 460M950 300L1000 410M860 370A30 45 0 1 1 900 450A30 45 0 1 1 860 370M630 240L700 290M620 360L840 500M640 420L680 350M720 360L780 440M860 120L1020 160M860 80L1020 110M900 20L880 200M950 20L930 220M990 20L970 230M840 0L820 150M1120 60V220M1150 130V250M1190 180V250M1220 190V260M1260 50V260M1170 200L1300 210M1180 50H1290M1340 150L1300 250M1290 320L1300 400M1420 240L1440 480M1460 200V300M1350 220L1568 240M1060 840L1110 880L1080 936M1060 840L1050 936M1250 630L1240 670M1390 780L1440 900"/>
        <path class="road" d="M340 150L550 160L660 60L600 480M660 60L540 0M540 160L520 430M670 70L850 160M850 160L1000 260L1130 275M850 0L870 60L830 210M520 0L540 170L480 280M380 260L530 350L640 400L800 470L950 590M700 290L730 360L840 500M810 220L750 580M630 210V480M680 160L740 260M360 360L330 630L450 610L520 660L560 640M330 630L180 820L120 890M180 820L200 930M450 620L470 430L480 280M440 480L590 600M500 680L430 680L370 720L350 800M750 580V720L780 870L800 936M590 830L620 790L750 760M1020 50L1010 250M860 450Q1010 560 1010 350L980 260M1100 0L1440 40L1568 10M1130 270H1330L1568 300M1440 40L1430 240L1380 430M1380 430H1430M690 660Q720 650 750 670M1450 0L1440 220M590 480L580 600M600 870L700 860L780 860M1260 850L1568 936"/>
        <path class="highway" d="M1060 0L1080 270L1060 400L960 600L900 720L850 936M1100 0L1110 200L1200 470Q1240 560 1350 660L1530 850M545 936L530 740Q530 640 600 600L660 590Q760 680 820 695Q900 690 950 600L1130 290L1110 180M850 450L970 600L1080 680M560 640L540 720L560 936M560 640L620 600M1300 860L1400 936"/>
      </g>
      <g transform="matrix(.4286 0 0 .3333 2560 1160)">
        <path class="street" d="M20 30L100 150L90 220M50 10L120 130L180 230M100 30L190 210M0 90L90 150M0 150L100 200M0 200L180 230L260 240M290 130L380 120L390 160L290 230M300 160L370 150M280 100Q400 60 400 170T300 260M320 200L370 170M160 370L140 470L190 490M160 310V360M90 400L200 410M620 330L780 370M630 350L790 400M620 380L780 420M620 410L770 440M650 310L630 430M680 320L660 440M710 330L690 450M740 350L720 460M770 360L760 470M660 120L760 150M650 160L740 180M640 220L720 240M700 80L650 270M730 90L680 300M640 280L700 290M800 20L900 100M790 90L730 290M880 110L950 130L1040 130L1100 40M960 100L1020 60M1000 20L960 100M1040 40L930 200M1060 100L1000 230M900 150L880 300M850 220L910 350L870 370M1030 250L980 400L900 430M1060 210L1010 340M1050 440L1340 440M1110 330L1220 320L1400 340M1040 530H1130M1140 430L1030 470L1060 530M990 640L1040 480M1020 590L1040 630M1240 510L1240 600M1170 570H1280M1350 620H1430M1360 640V740H1420M1380 620V700M1390 510V620M1270 600L1280 720M1180 520L1170 690L1280 740M1290 270L1310 370M1330 290V380L1390 390M1290 100L1340 90M1350 10L1380 160M1290 60L1280 170M1430 40L1400 120L1440 180M1450 80L1492 60M820 740L930 780M990 740L1120 760M1010 770H1120M1000 800L1140 830M1030 730L1010 830M1060 740L1050 830M1090 750L1080 840M660 660L640 780L710 810M640 650L620 720M930 830L990 850M520 80L540 20M470 50L620 90M1420 20L1430 240"/>
        <path class="road" d="M0 330L130 360M710 0L770 90L870 145L1050 40H1110L1230 30M870 145L1050 0M870 145Q820 240 830 330L840 380L880 385L890 490L960 510L940 590L930 680M770 90L710 280M1180 180L1160 0M1100 0L1150 140M1180 180L1400 270M1220 0L1270 110V170H1370L1400 270M1380 0L1370 170M1400 320H1460L1492 290M1170 200L990 640L985 830M1170 620H1430M980 790L1140 850L1130 936M1140 750L1120 850M290 30Q340 50 420 30M240 370L180 350M210 40Q260 110 220 350M1410 270L1440 270M1275 500L1280 620L1270 770M0 350L230 370M430 50L470 30L430 0"/>
        <path class="highway" d="M0 330L180 355Q290 370 350 430Q440 500 490 580L590 610L740 655L840 665M680 0L620 150L590 350L585 936M590 500Q600 570 630 620L590 700M1000 700L1140 740L1280 775L1492 810M600 610L580 700V936M720 0L760 90M1400 160L1410 300L1430 500L1420 936"/>
      </g>

      <!-- boundaries and railways -->
      <path class="dash" d="M2714 204L2792 206L2778 240L2880 240L2886 262L2910 268V340L2932 346L2954 340L2956 320L2996 352L3016 332L3032 346L3012 460M3082 74L3102 130L3132 136L3140 178L3162 190L3134 220L3152 270V302M2700 290L2758 296L2716 200M2560 212Q2600 230 2630 280L2700 290M3012 450L2992 540L2982 590L2970 690L2950 870M2746 790L2770 780L2790 870L2840 890L2846 970L2900 990M2793 870L2850 900M2900 1030L2960 1020L3100 990L3190 950L3180 1080V1160M2660 790L2700 770M2740 610L2750 780M2700 900L2670 1020L2650 1080M2640 1300L2610 1400L2595 1440M2960 1330L3060 1210L3078 1240L3186 1260M3052 1322L3160 1330M2970 1320L2960 1340L2965 1400M2820 1366L2920 1380L3000 1395M3180 1160L3184 1250M2900 1060L2960 1080M2135 1320L2220 1376L2280 1430M2430 1430L2440 1408L2510 1430"/>
      <path class="rail" d="M2558 440L2515 590M2630 72L2636 380L2622 440L2530 590M2536 700L2502 860L2460 950L2440 1040L2390 1100L2380 1200M2680 530Q2800 555 2900 560T3060 520L3148 490"/>

      <!-- Mediterranean -->
      <path class="sea" d="M1496 72H2427L2400 170L2382 233L2363 305L2343 318L2348 337L2332 393L2322 437L2309 452L2303 475L2284 483L2270 530L2262 590L2255 627L2249 657L2230 658L2240 672V692L2234 702L2217 706L2230 714L2214 760L2205 800L2184 870L2172 917L2165 950L2132 1067L2113 1107L2088 1137L2050 1150L2043 1165L2026 1197L2019 1217L1993 1360L1969 1413L1950 1457L1954 1472H1496Z"/>
      <path class="offshore" d="M2384 72Q2330 320 2290 400L2245 445V470Q2200 620 2180 700L2160 860L2110 1020Q2100 1080 2040 1100Q1960 1180 1950 1260L1950 1350L1920 1471M1934 1417L1972 1425"/>

      <!-- place names -->
      <g class="labels" id="labels"></g>

      <!-- markers, back to front -->
      <use href="#pin" x="2541" y="262"/><use href="#pin" x="2546" y="263"/>
      <use href="#pin" x="2258" y="621"/><use href="#pin" x="2267" y="613"/>
      <use href="#pin" x="2362" y="651"/><use href="#pin" x="2562" y="733"/>
      <use href="#pin" x="2343" y="820"/><use href="#pin" x="2215" y="857"/><use href="#pin" x="2198" y="865"/>
      <use href="#pin" x="2365" y="1053"/><use href="#pin" x="2398" y="944"/><use href="#pin" x="2380" y="950"/>
      <use href="#pin" x="2324" y="1036"/><use href="#pin" x="2305" y="1016"/>
      <use href="#pin" x="2297" y="873"/><use href="#pin" x="2417" y="849"/>
      <use href="#pin" x="2155" y="1094"/><use href="#pin" x="1996" y="1354"/>
    </svg>
    <div class="zoom-controls">
      <button class="zoom" aria-label="Zoom out"><svg viewBox="0 0 240 195"><circle cx="109.5" cy="77.5" r="42"/><path d="M88.500 77.500H130.500"/><path class="handle" d="M144 112.500L169 137"/></svg></button>
      <button class="zoom" aria-label="Zoom in"><svg viewBox="0 0 240 195"><circle cx="109.5" cy="77.5" r="42"/><path d="M88.500 77.500H130.500M109.500 56.500V98.500"/><path class="handle" d="M144 112.500L169 137"/></svg></button>
    </div>
    <div class="attribution"><span class="credit">Powered by <a>Geoapify</a> | <a>© OpenMapTiles</a> <a>© OpenStreetMap</a> contributors</span></div>
  </section>
</main>
<script src="labels.js"></script>
</body>
</html>
```
FILE: labels.js
```js
// [name, x, y, width, hebrew name, x, y, width]
const places = [
  ["", 0, 0, 0, "רמת השרון", 2895, 87, 102],
  ["Neve Rasko", 2895, 127, 123, "נווה רסקו", 2895, 158, 87],
  ["Ne", 3194, 105, 30, "", 0, 0, 0],
  ["Azorei Hen", 2461, 206, 116, "אזורי חן", 2461, 237, 71],
  ["Amidar", 3017, 221, 79, "עמידר", 3017, 252, 60],
  ["Afeka", 2591, 300, 59, "אפקה", 2591, 331, 56],
  ["Zahala", 2875, 299, 70, "צהלה", 2875, 330, 54],
  ["Nofei Yam", 2401, 396, 109, "נופי ים", 2401, 427, 61],
  ["Revivim", 2801, 385, 82, "רביבים", 2801, 415, 66],
  ["Yisgav", 2855, 454, 67, "ישגב", 2855, 484, 46],
  ["Lamed", 2430, 485, 71, "שיכון ל'", 2430, 515, 67],
  ["Kokhav", 2375, 555, 75, "", 0, 0, 0],
  ["HaTsafon", 2375, 588, 100, "כוכב הצפון", 2375, 619, 102],
  ["Ben Gurion", 2681, 744, 118, "בן גוריון", 2681, 775, 71],
  ["Bnei Brak", 2839, 740, 101, "בני ברק", 2839, 770, 74],
  ["Ramat Siv", 3085, 728, 104, "רמת סיב", 3085, 758, 84],
  ["Ha", 3186, 560, 28, "הד", 3188, 590, 28],
  ["HaRishonim", 2568, 815, 127, "הראשונים", 2568, 845, 93],
  ["Hillel", 2746, 814, 51, "הלל", 2746, 845, 38],
  ["Givat Shmuel", 3033, 871, 140, "גבעת שמואל", 3033, 901, 123],
  ["Neve Oz", 3165, 847, 88, "נווה עוז", 3166, 877, 70],
  ["Kiryat Yosef", 2562, 888, 125, "קרית יוסף", 2562, 918, 93],
  ["Bitsaron", 2492, 959, 88, "ביצרון", 2492, 990, 55],
  ["Ramat Gan", 2764, 974, 116, "רמת גן", 2764, 1004, 65],
  ["Tel Ganim", 2673, 1061, 108, "תל גנים", 2673, 1092, 74],
  ["Kiryat Ono", 3101, 1093, 111, "קריית אונו", 3101, 1124, 94],
  ["Yad Eliyahu", 2460, 1098, 121, "יד אליהו", 2460, 1129, 77],
  ["Orot", 2554, 1105, 49, "אורות", 2554, 1136, 55],
  ["Ramat Hen", 2713, 1130, 117, "רמת חן", 2713, 1160, 70],
  ["Kfar Azar", 2928, 1127, 95, "כפר אז״ר", 2928, 1157, 86],
  ["Shabazi", 2181, 1047, 80, "שבזי", 2180, 1077, 44],
  ["Suk A-Dir", 2107, 1151, 97, "שוק א-דיר", 2107, 1181, 95],
  ["HaTikva", 2409, 1192, 83, "התקווה", 2409, 1223, 70],
  ["Abu Kabir", 2220, 1244, 103, "אבו כביר", 2220, 1275, 84],
  ["Neve Kfir", 2524, 1234, 98, "נווה כפיר", 2524, 1265, 85],
  ["Nir Aviv", 2636, 1233, 83, "ניר אביב", 2636, 1264, 81],
  ["Ezra", 2436, 1282, 44, "עזרא", 2436, 1313, 46],
  ["Jaffa", 2046, 1280, 52, "יפו", 2049, 1309, 26],
  ["Neve Ofer", 2196, 1316, 107, "נווה עופר", 2196, 1346, 85],
  ["Tel HaShomer", 2958, 1248, 150, "תל השומר", 2958, 1278, 99],
  ["Ramat Pinkas", 2922, 1401, 142, "רמת פנקס", 2922, 1432, 100],
  ["Shikun Amidar", 2100, 1478, 153, "", 0, 0, 0],
  ["Azor", 2552, 1486, 48, "", 0, 0, 0]
];

// [text, x, y, width, rotation]
const streets = [
  ["2040", 2477, 123, 38, -63],
  ["AYALON S", 2616, 106, 92, -90],
  ["חיים לבנון", 2540, 401, 104, -86],
  ["LEVANON", 2538, 474, 78, -80],
  ["CHAIM", 2508, 533, 54, -46],
  ["GEHA", 3134, 256, 40, -4],
  ["כביש", 3176, 250, 33, -14],
  ["ג", 3196, 231, 10, -40],
  ["HAYARKON", 2197, 918, 96, -76],
  ["ה", 2213, 862, 10, -70],
  ["HERZL", 2238, 1182, 56, -84],
  ["הרצל", 2241, 1130, 42, -90],
  ["GEHA", 2816, 1263, 42, -82],
  ["כביש", 2829, 1218, 36, -76],
  ["גהה", 2844, 1181, 28, -66],
  ["HASHIVA", 2396, 1416, 72, 35],
  ["השבעה", 2449, 1449, 54, 42],
  ["3", 3073, 1248, 8, 0],
  ["DEREKH LOD", 3153, 1429, 92, 4]
];

const layer = document.getElementById("labels");
function addText(text, x, y, width, className, angle) {
  if (!text) return;
  const node = document.createElementNS("http://www.w3.org/2000/svg", "text");
  node.setAttribute("class", className);
  node.setAttribute("x", x);
  node.setAttribute("y", y);
  node.setAttribute("textLength", width);
  node.setAttribute("lengthAdjust", "spacingAndGlyphs");
  if (angle) node.setAttribute("transform", `rotate(${angle} ${x} ${y - 6})`);
  node.textContent = text;
  layer.append(node);
}
for (const [text, x, y, width, angle] of streets) addText(text, x, y, width, "street-name", angle);
for (const [en, x, y, w, he, hx, hy, hw] of places) {
  addText(en, x, y, w, "place-name");
  addText(he, hx, hy, hw, "place-name");
}
addText("ב", 2366, 800, 14, "city-name");
```
FILE: styles.css
```css
* { box-sizing: border-box; }
body { margin: 0; background: #fdfff7; font-family: Roboto, "Liberation Sans", sans-serif; }
.page { display: flex; gap: 95px; height: 1592px; padding: 72px 32px 0 64px; overflow: hidden; }

/* place cards */
.places { width: 1337px; height: 1520px; display: flex; flex-direction: column; gap: 40px; overflow: hidden; }
.card { flex: none; height: 626px; padding: 88px 95px 60px 96px; background: #265a20; color: #fff; display: flex; flex-direction: column; }
.card-first { height: 74px; padding-top: 0; padding-bottom: 60px; }
.card-first .btn { height: 14px; }
.fit { display: inline-block; white-space: nowrap; transform-origin: 0 50%; }
.fit-vaca { transform: scaleX(.629); }
.fit-meat { transform: scaleX(.638); }
.fit-medinat { transform: scaleX(.63); }
.fit-aluf { transform: scaleX(.624); }
.name { margin: 0; font-size: 62px; font-weight: 900; line-height: 76px; -webkit-text-stroke: 2.4px #fff; }
.address { margin: 58px 0 0; font-size: 40px; font-weight: 900; line-height: 48px; letter-spacing: 3.3px; -webkit-text-stroke: 1.4px #fff; }
.actions { margin-top: auto; padding-left: 55px; display: flex; gap: 115px; }
.btn { height: 226px; border: 0; padding: 0 0 4px; background: #cfe6a6; color: #2b6922; font: 900 51.5px/61px Roboto, "Liberation Sans", sans-serif; display: flex; flex-direction: column; align-items: center; justify-content: center; }
.line { white-space: nowrap; transform: scaleX(.601); -webkit-text-stroke: 1.2px currentColor; }
.google { width: 440px; }
.center { width: 476px; }
.active { background: #2b6822; color: #cfe6a6; }

/* map */
.map { width: 1704px; height: 1399px; position: relative; overflow: hidden; }
.canvas { display: block; width: 1704px; height: 1399px; }
.canvas path { vector-effect: non-scaling-stroke; }
.land { fill: #e2dfd8; }
.plain { fill: #e2dfd9; }
.farm { fill: #e7e4d9; }
.green { fill: #d2dcb5; }
.bright { fill: #cadba6; }
.sand { fill: #e3dca5; }
.lake { fill: #90b8de; }
.sea { fill: #9dbfde; }
.minor { fill: none; stroke: #f3f2ee; stroke-width: 2; }
.street { fill: none; stroke: #f8f7f4; stroke-width: 2.4; stroke-linejoin: round; }
.road { fill: none; stroke: #fefefc; stroke-width: 4; stroke-linejoin: round; stroke-linecap: round; }
.highway { fill: none; stroke: #fff; stroke-width: 7; stroke-linejoin: round; stroke-linecap: round; }
.major { stroke-width: 10; }
.river { fill: none; stroke: #94bcd0; stroke-width: 3.2; stroke-linejoin: round; }
.river.wide { stroke: #9abedb; stroke-width: 9; }
.river.mid { stroke: #9abedb; stroke-width: 5; }
.river.thin { stroke-width: 2; }
.dash { fill: none; stroke: #aaa; stroke-width: 1; stroke-dasharray: 4 3; }
.rail { fill: none; stroke: #c9c8c5; stroke-width: 1.5; }
.offshore { fill: none; stroke: #8ba8c0; stroke-width: .8; stroke-dasharray: 5 3; }
.labels text { text-anchor: middle; direction: ltr; unicode-bidi: bidi-override; font-family: "Noto Sans", "Open Sans", "DejaVu Sans", sans-serif; paint-order: stroke; stroke: rgba(255, 255, 255, .85); stroke-width: 4px; stroke-linejoin: round; }
.place-name { font-size: 27px; font-weight: 500; fill: #5e5f64; }
.street-name { font-size: 19px; font-weight: 600; fill: #46474a; }
.labels .city-name { font-size: 27px; font-weight: 600; fill: #222; }
.drop { fill: #56b336; stroke: #489c2e; stroke-width: 3; }
.shadow { fill: #3c5a3c; opacity: .2; filter: url(#soft); }

.zoom-controls { position: absolute; left: 0; top: 0; display: flex; gap: 15px; }
.zoom { width: 240px; height: 195px; padding: 0; border: 0; background: #cfe6a6; }
.zoom svg { display: block; width: 240px; height: 195px; fill: none; stroke: #2b6922; stroke-width: 7; stroke-linecap: round; }
.zoom .handle { stroke-width: 14; }
.attribution { position: absolute; right: 0; bottom: 0; height: 36px; width: 660px; padding-right: 9px; display: flex; justify-content: flex-end; background: rgba(255, 255, 255, .6); font: 23px/37px "Liberation Sans", Arial, sans-serif; color: #111; }
.credit { white-space: nowrap; transform: scaleX(.88); transform-origin: 100% 50%; }
.credit a { color: #404040; }
```
